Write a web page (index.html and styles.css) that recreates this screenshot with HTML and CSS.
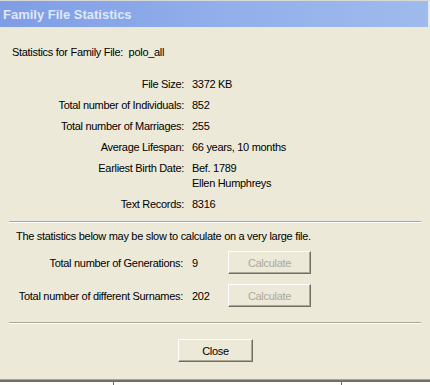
FILE: index.html
```html
<!DOCTYPE html>
<html lang="en">
<head>
    <meta charset="UTF-8">
    <title>Family File Statistics</title>
<link rel="stylesheet" href="styles.css">
</head>
<body>
    <div id="dialog">
        <div class="titlebar">Family File Statistics</div>

        <div class="dlg-body">
            <div class="file-line">Statistics for Family File:&nbsp; polo_all</div>

            <div class="stats">
                <div class="lbl">File Size:</div><div class="val">3372 KB</div>
                <div class="lbl">Total number of Individuals:</div><div class="val">852</div>
                <div class="lbl">Total number of Marriages:</div><div class="val">255</div>
                <div class="lbl">Average Lifespan:</div><div class="val">66 years, 10 months</div>
                <div class="lbl">Earliest Birth Date:</div><div class="val">Bef. 1789<br>Ellen Humphreys</div>
                <div class="lbl">Text Records:</div><div class="val">8316</div>
            </div>

            <div class="sep"></div>

            <div class="note">The statistics below may be slow to calculate on a very large file.</div>

            <div class="calc">
                <div class="lbl">Total number of Generations:</div><div class="val">9</div>
                <button class="btn" disabled>Calculate</button>
                <div class="lbl">Total number of different Surnames:</div><div class="val">202</div>
                <button class="btn" disabled>Calculate</button>
            </div>

            <div class="sep"></div>

            <div class="actions">
                <button class="btn close">Close</button>
            </div>
        </div>

        <div class="edge">
            <span class="tick t1"></span>
            <span class="tick t2"></span>
        </div>
    </div>
</body>
</html>
```

FILE: styles.css
```css
*{
    margin: 0;
    padding: 0;
    box-sizing: border-box;
}
body{
    width: 430px;
    height: 385px;
    overflow: hidden;
    background: #ece9d8;
    font-family: "Liberation Sans", Arial, sans-serif;
    font-size: 11px;
    letter-spacing: -0.3px;
    color: #000;
}
#dialog{
    width: 430px;
    height: 385px;
    display: flex;
    flex-direction: column;
    background: #ece9d8;
    border-top: 1px solid #d8d8d8;
}
.titlebar{
    height: 26px;
    margin-right: 1px;
    padding-left: 3px;
    display: flex;
    align-items: center;
    background: linear-gradient(to right, #7f9de5, #8fadea 45%, #9fbbed);
    border-right: 1px solid #e8ecf6;
    color: #dfe8fb;
    font-family: "Liberation Sans", Arial, sans-serif;
    font-weight: bold;
    font-size: 13px;
    letter-spacing: 0;
}
.dlg-body{
    flex: 1;
    padding: 0 9px;
    display: flex;
    flex-direction: column;
}
.file-line{
    margin-top: 19px;
    padding-left: 3px;
    line-height: 13px;
}
.stats{
    margin-top: 18px;
    display: grid;
    grid-template-columns: 175px auto;
    column-gap: 8px;
    row-gap: 6px;
    line-height: 15px;
}
.lbl{
    text-align: right;
    white-space: nowrap;
}
.val{
    white-space: nowrap;
}
.sep{
    height: 2px;
    border-top: 1px solid #aca899;
    border-bottom: 1px solid #fff;
}
.stats + .sep{
    margin-top: 9px;
}
.note{
    margin-top: 7px;
    padding-left: 7px;
    line-height: 13px;
}
.calc{
    margin-top: 8px;
    display: grid;
    grid-template-columns: 174px 27px auto;
    column-gap: 9px;
    row-gap: 10px;
    align-items: center;
    justify-items: start;
}
.calc .lbl{
    justify-self: end;
}
.btn{
    width: 83px;
    height: 23px;
    font-family: "Liberation Sans", Arial, sans-serif;
    font-size: 11px;
    letter-spacing: -0.3px;
    background: #ece9d8;
    color: #000;
    border: 1px solid;
    border-color: #fff #716f64 #716f64 #fff;
    box-shadow: inset -1px -1px 0 #aca899;
}
.btn:disabled{
    color: #aca899;
}
.calc + .sep{
    margin-top: 15px;
}
.actions{
    display: flex;
    justify-content: center;
    margin-top: 15px;
    padding-left: 1px;
}
.close{
    width: 75px;
}
.edge{
    height: 6px;
    position: relative;
    background: #fff;
    border-top: 1px solid #aca899;
    box-shadow: inset 0 2px 0 #716f64;
}
.tick{
    position: absolute;
    top: 2px;
    width: 1px;
    height: 4px;
    background: #3d6ad0;
}
.t1{ left: 113px; }
.t2{ left: 341px; }
```
